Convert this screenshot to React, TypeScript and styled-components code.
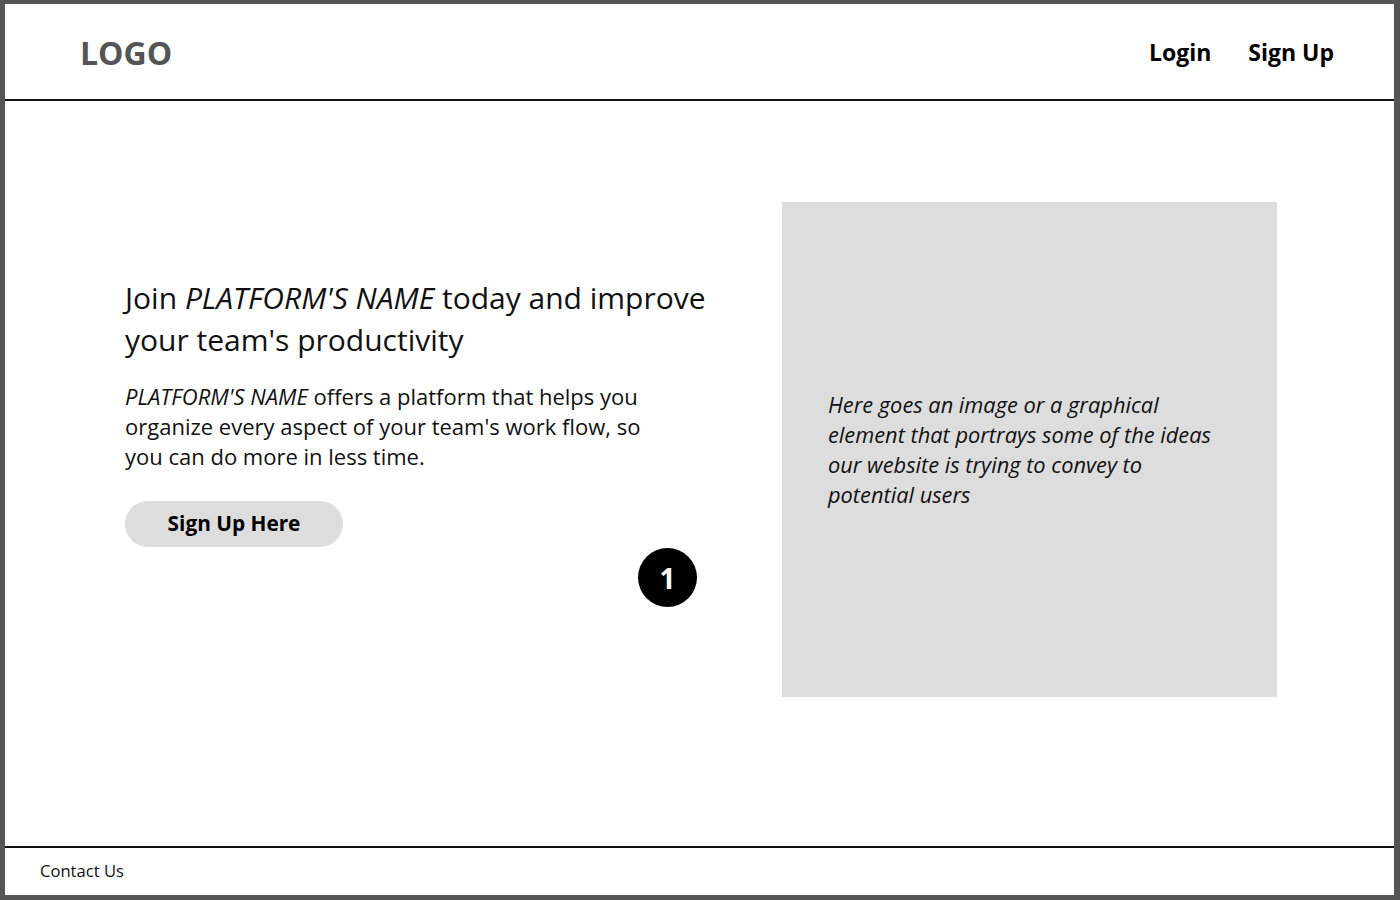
import React from 'react'
import styled, { createGlobalStyle } from 'styled-components'

const GlobalStyle = createGlobalStyle`
  * {
    box-sizing: border-box;
  }

  html, body {
    margin: 0;
    padding: 0;
    background: #ffffff;
  }

  body {
    font-family: 'Open Sans', 'Noto Sans', sans-serif;
    color: #111111;
  }
`

const Frame = styled.div`
  height: 900px;
  display: flex;
  flex-direction: column;
  border-style: solid;
  border-color: #555555;
  border-width: 4px 6px 5px 5px;
  background: #ffffff;
`

const Header = styled.header`
  height: 97px;
  flex-shrink: 0;
  display: flex;
  align-items: center;
  justify-content: space-between;
  padding: 0 60px 0 75px;
  border-bottom: 2px solid #111111;
`

const Logo = styled.div`
  font-size: 32px;
  font-weight: 700;
  color: #555555;
  line-height: 1;
  margin-top: 2px;
`

const Nav = styled.nav`
  display: flex;
  gap: 37px;
  margin-top: 1px;
`

const NavLink = styled.a`
  font-size: 23px;
  font-weight: 700;
  color: #000000;
  text-decoration: none;
  cursor: pointer;
`

const Main = styled.main`
  flex: 1;
  display: flex;
  align-items: flex-start;
  gap: 62px;
  padding: 101px 117px 0 120px;
`

const Intro = styled.section`
  width: 595px;
  display: flex;
  flex-direction: column;
  align-items: flex-start;
  padding-top: 75px;
`

const Heading = styled.h1`
  margin: 0;
  font-size: 30px;
  font-weight: 400;
  line-height: 42px;
  color: #111111;
`

const Lead = styled.p`
  margin: 20px 0 0;
  max-width: 545px;
  font-size: 22px;
  line-height: 30px;
  color: #111111;
`

const Button = styled.button`
  margin-top: 30px;
  width: 218px;
  height: 46px;
  border: none;
  border-radius: 23px;
  background: #dddddd;
  font-family: inherit;
  font-size: 20.8px;
  font-weight: 700;
  color: #000000;
  padding: 0 0 3px;
  cursor: pointer;
`

const StepBadge = styled.div`
  align-self: flex-end;
  margin: 1px 23px 0 0;
  width: 59px;
  height: 59px;
  border-radius: 50%;
  background: #000000;
  color: #ffffff;
  display: flex;
  align-items: center;
  justify-content: center;
  font-size: 28px;
  font-weight: 700;
`

const Placeholder = styled.div`
  width: 495px;
  height: 495px;
  flex-shrink: 0;
  background: #dddddd;
  display: flex;
  align-items: center;
  padding: 0 56px 0 46px;
`

const PlaceholderText = styled.p`
  margin: 0;
  font-size: 21.8px;
  line-height: 30px;
  font-style: italic;
  color: #111111;
`

const Footer = styled.footer`
  height: 49px;
  flex-shrink: 0;
  display: flex;
  align-items: center;
  padding: 0 35px 2px;
  border-top: 2px solid #111111;
  font-size: 16.6px;
  color: #111111;
`

export default function App() {
  return (
    <>
      <GlobalStyle />
      <Frame>
        <Header>
          <Logo>LOGO</Logo>
          <Nav>
            <NavLink>Login</NavLink>
            <NavLink>Sign Up</NavLink>
          </Nav>
        </Header>
        <Main>
          <Intro>
            <Heading>
              Join <em>PLATFORM'S NAME</em> today and improve your team's productivity
            </Heading>
            <Lead>
              <em>PLATFORM'S NAME</em> offers a platform that helps you organize every aspect of your
              team's work flow, so you can do more in less time.
            </Lead>
            <Button>Sign Up Here</Button>
            <StepBadge>1</StepBadge>
          </Intro>
          <Placeholder>
            <PlaceholderText>
              Here goes an image or a graphical element that portrays some of the ideas our website
              is trying to convey to potential users
            </PlaceholderText>
          </Placeholder>
        </Main>
        <Footer>Contact Us</Footer>
      </Frame>
    </>
  )
}
